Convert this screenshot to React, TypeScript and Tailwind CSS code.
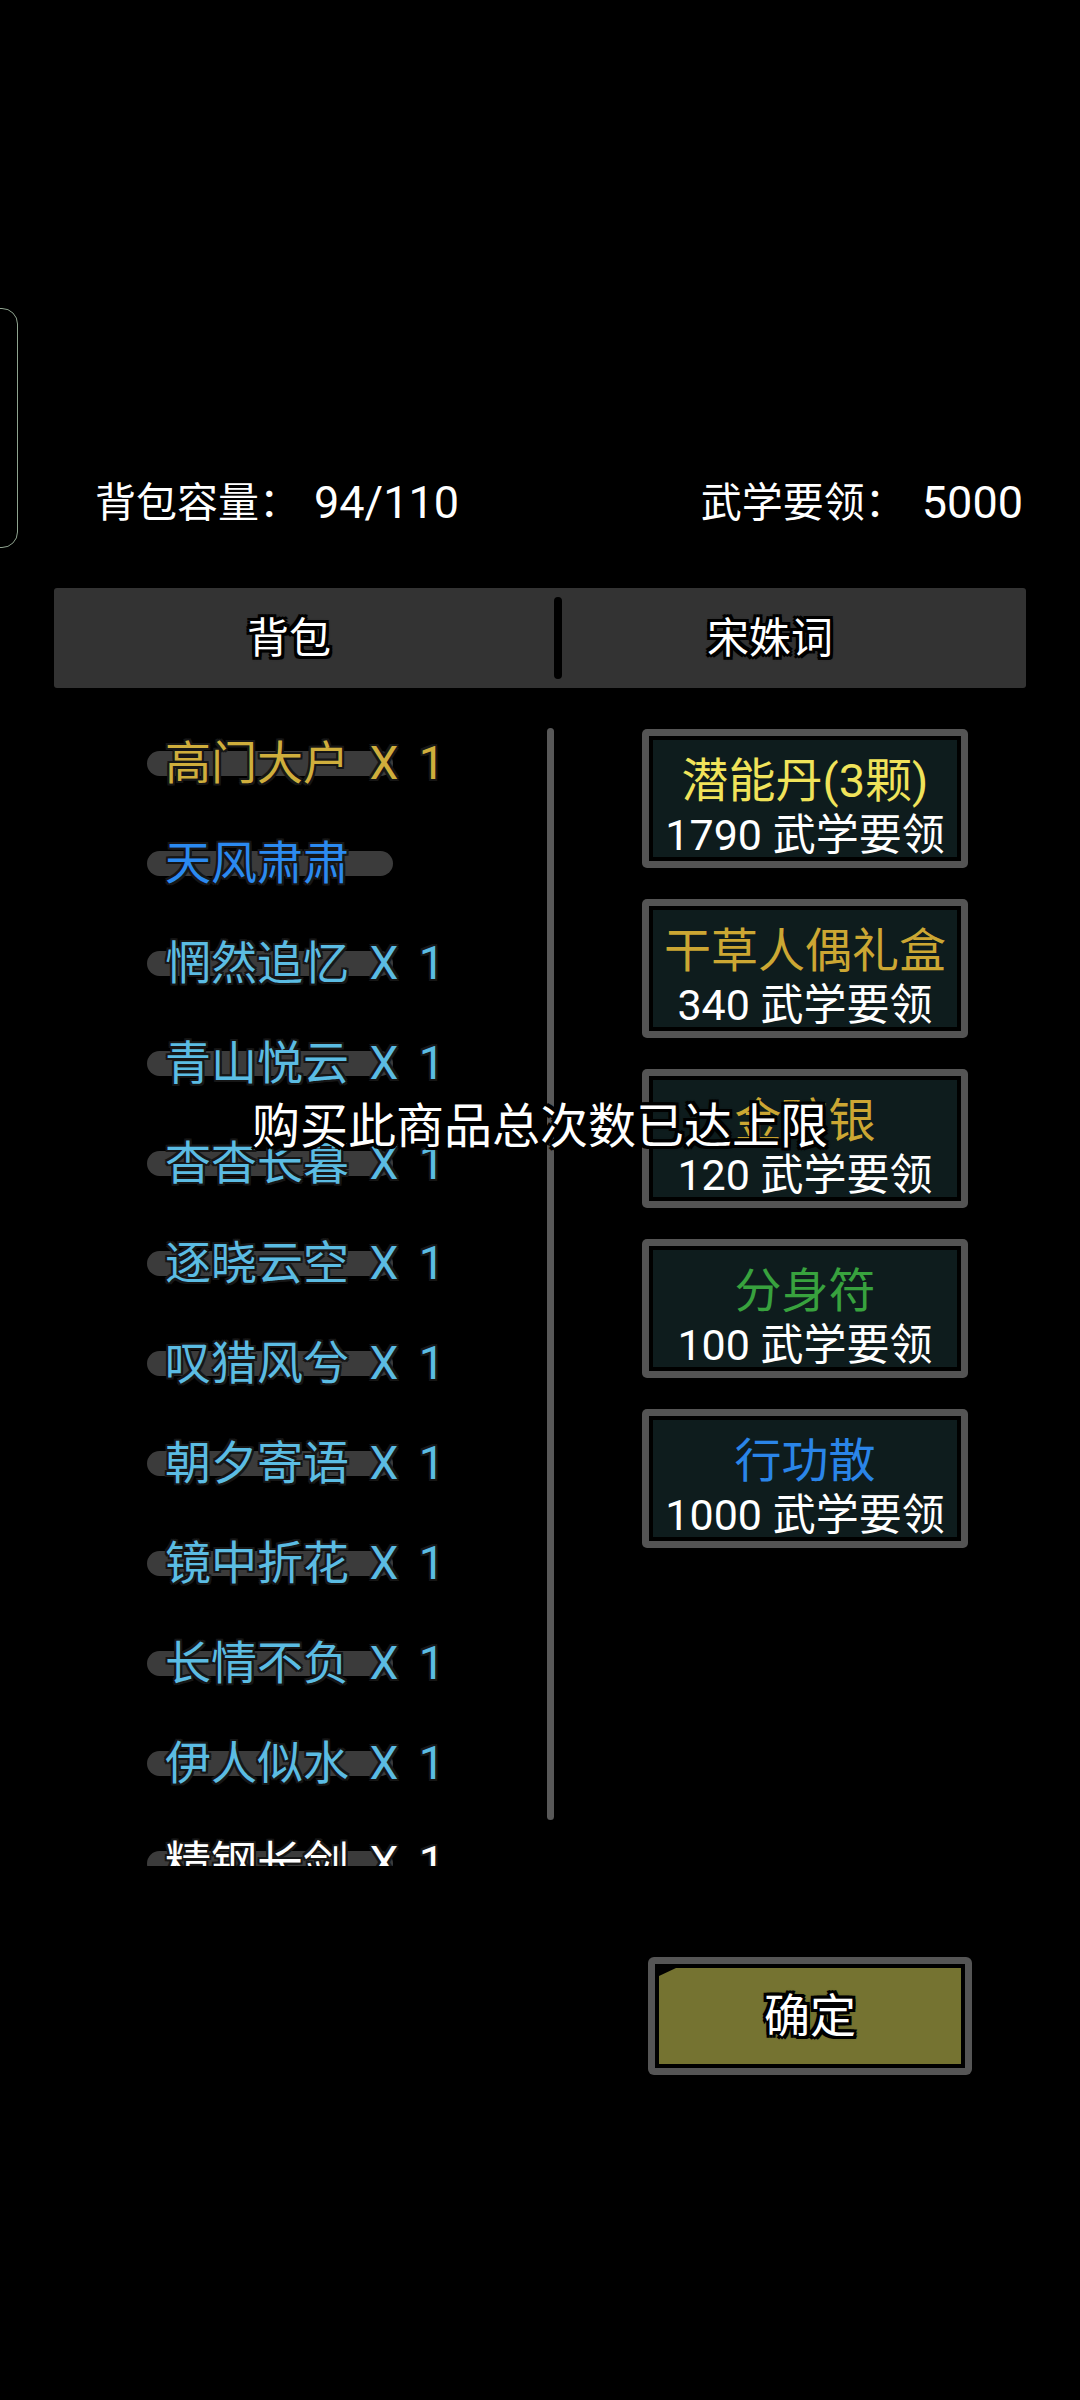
import React from 'react';

interface BagItem {
  name: string;
  color: string;
}

interface ShopItem {
  title: string;
  price: number;
  color: string;
}

const BAG_ITEMS: BagItem[] = [
  { name: '高门大户 X 1', color: 'text-[#cfae3c]' },
  { name: '天风肃肃', color: 'text-[#2b8af0]' },
  { name: '惘然追忆 X 1', color: 'text-[#5bbce3]' },
  { name: '青山悦云 X 1', color: 'text-[#5bbce3]' },
  { name: '杳杳长暮 X 1', color: 'text-[#5bbce3]' },
  { name: '逐晓云空 X 1', color: 'text-[#5bbce3]' },
  { name: '叹猎风兮 X 1', color: 'text-[#5bbce3]' },
  { name: '朝夕寄语 X 1', color: 'text-[#5bbce3]' },
  { name: '镜中折花 X 1', color: 'text-[#5bbce3]' },
  { name: '长情不负 X 1', color: 'text-[#5bbce3]' },
  { name: '伊人似水 X 1', color: 'text-[#5bbce3]' },
  { name: '精钢长剑 X 1', color: 'text-white' },
];

const SHOP_ITEMS: ShopItem[] = [
  { title: '潜能丹(3颗)', price: 1790, color: 'text-[#f0e35a]' },
  { title: '干草人偶礼盒', price: 340, color: 'text-[#cca733]' },
  { title: '金碎银', price: 120, color: 'text-[#cca733]' },
  { title: '分身符', price: 100, color: 'text-[#38a23e]' },
  { title: '行功散', price: 1000, color: 'text-[#2a85e8]' },
];

// thin dark outline used on list entries
const OUTLINE_THIN =
  '[text-shadow:-2px_-2px_0_#161616,2px_-2px_0_#161616,-2px_2px_0_#161616,2px_2px_0_#161616,0_-2px_0_#161616,0_2px_0_#161616,-2px_0_0_#161616,2px_0_0_#161616]';

// heavier black outline for tabs, toast and button
const OUTLINE_BOLD =
  '[text-shadow:-3px_-3px_0_#000,3px_-3px_0_#000,-3px_3px_0_#000,3px_3px_0_#000,0_-3px_0_#000,0_3px_0_#000,-3px_0_0_#000,3px_0_0_#000,0_0_4px_#000]';

export default function App() {
  return (
    <div className="relative w-[1080px] h-[2400px] bg-black overflow-hidden font-['Roboto','Noto_Sans_CJK_SC',sans-serif] text-white">
      {/* side drawer edge */}
      <div className="absolute left-[-22px] top-[308px] w-[40px] h-[240px] rounded-[16px] border-[1.5px] border-[#8fa38f]" />

      {/* header */}
      <div className="pt-[479px] pl-[95px] pr-[57px] flex justify-between items-center h-[527px] text-[41px] leading-[48px]">
        <div className="flex items-center">
          <span>背包容量：</span>
          <span className="ml-[14px] text-[45px]">94/110</span>
        </div>
        <div className="flex items-center">
          <span>武学要领：</span>
          <span className="ml-[16px] text-[45px]">5000</span>
        </div>
      </div>

      {/* tabs */}
      <div className="mt-[61px] mx-[54px] h-[100px] bg-[#333333] rounded-[3px] flex items-center">
        <div className={`w-[500px] pr-[30px] h-full flex items-center justify-center text-[42px] ${OUTLINE_BOLD}`}>背包</div>
        <div className="w-[8px] h-[82px] bg-black rounded-full" />
        <div className={`flex-1 pr-[48px] h-full flex items-center justify-center text-[42px] ${OUTLINE_BOLD}`}>宋姝词</div>
      </div>

      {/* body */}
      <div className="mt-[25px] ml-[147px] flex items-start">
        <div className="w-[400px] h-[1153px] overflow-hidden flex flex-col">
          {BAG_ITEMS.map(item => (
            <div key={item.name} className="relative h-[100px] shrink-0 flex items-center">
              <div className="absolute left-0 top-[38px] w-[246px] h-[25px] rounded-full bg-[#3b3b3b]" />
              <span className={`relative ml-[18px] text-[46px] leading-[56px] [word-spacing:9px] whitespace-nowrap ${item.color} ${OUTLINE_THIN}`}>
                {item.name}
              </span>
            </div>
          ))}
        </div>

        <div className="mt-[15px] w-[7px] h-[1092px] rounded-full bg-[#585858]" />

        <div className="ml-[88px] mt-[16px] flex flex-col gap-[31px]">
          {SHOP_ITEMS.map(item => (
            <div key={item.title} className="w-[326px] h-[139px] rounded-[5px] bg-[#545454] p-[7px]">
              <div className="w-full h-full bg-black p-[4px]">
                <div className="w-full h-full bg-[#0e1c1d] flex flex-col items-center">
                  <div className={`mt-[17px] text-[47px] leading-[48px] whitespace-nowrap ${item.color}`}>{item.title}</div>
                  <div className="mt-[9px] text-[43px] leading-[43px] whitespace-nowrap text-white">
                    {item.price} 武学要领
                  </div>
                </div>
              </div>
            </div>
          ))}
        </div>
      </div>

      {/* confirm */}
      <div className="mt-[91px] flex justify-end pr-[108px]">
        <button className="w-[324px] h-[118px] rounded-[6px] bg-[#555555] p-[7px]">
          <div className="w-full h-full bg-black p-[4px]">
            <div className="w-full h-full bg-[#757331] [clip-path:polygon(17px_0,100%_0,100%_100%,0_100%,0_8px)] flex items-center justify-center">
              <span className={`text-[46px] leading-[50px] ${OUTLINE_BOLD}`}>确定</span>
            </div>
          </div>
        </button>
      </div>

      {/* toast */}
      <div className={`absolute left-0 right-0 top-[1097px] text-center text-[48px] leading-[60px] text-white ${OUTLINE_BOLD}`}>
        购买此商品总次数已达上限
      </div>
    </div>
  );
}
